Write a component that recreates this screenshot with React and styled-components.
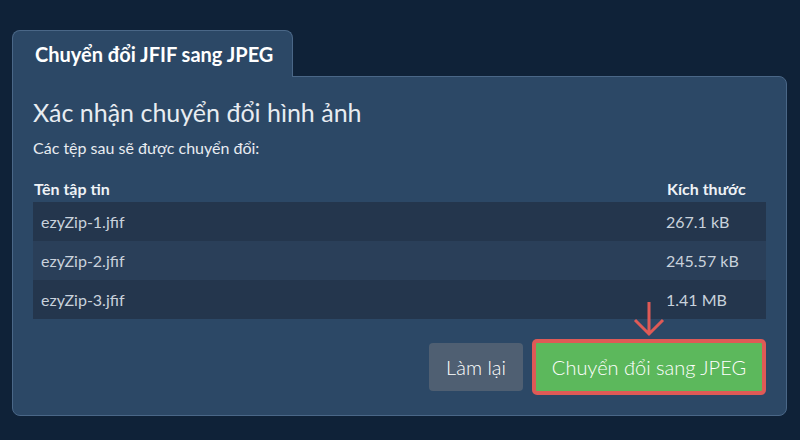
import styled, { createGlobalStyle } from "styled-components";

const GlobalStyle = createGlobalStyle`
  html, body {
    margin: 0;
    padding: 0;
    background: #0f2238;
    font-family: Lato, "Noto Sans", sans-serif;
  }
`;

const Page = styled.div`
  width: 800px;
  height: 440px;
  box-sizing: border-box;
  padding: 30px 13px 0 12px;
`;

const Tab = styled.div`
  position: relative;
  z-index: 1;
  width: 281px;
  height: 47px;
  box-sizing: border-box;
  margin-bottom: -1px;
  padding: 11px 0 0 22px;
  background: #2c4866;
  border: 1px solid #4a6787;
  border-bottom: none;
  border-radius: 8px 8px 0 0;
  color: #ffffff;
  font-size: 20px;
  font-weight: 700;
`;

const Panel = styled.div`
  box-sizing: border-box;
  height: 340px;
  padding: 20px 20px 0 20px;
  background: #2c4866;
  border: 1px solid #4a6787;
  border-radius: 0 8px 8px 8px;
`;

const Title = styled.h2`
  margin: 0;
  font-size: 25px;
  font-weight: 400;
  line-height: 30px;
  color: #e8ecf1;
`;

const Subtitle = styled.p`
  margin: 12px 0 0;
  font-size: 16px;
  line-height: 18px;
  color: #e8ecf1;
`;

const Table = styled.div`
  margin-top: 18px;
  display: grid;
  grid-template-columns: 1fr 100px;
`;

const HeadCell = styled.div`
  height: 27px;
  display: flex;
  align-items: center;
  padding-left: 1px;
  font-size: 16px;
  font-weight: 700;
  color: #eef2f6;
`;

const Cell = styled.div`
  height: 39px;
  display: flex;
  align-items: center;
  padding-left: ${(p) => (p.$first ? "8px" : "0")};
  background: ${(p) => (p.$odd ? "#24364d" : "#2a3f59")};
  font-size: 16px;
  color: #c9d2dc;
`;

const ButtonRow = styled.div`
  margin-top: 20px;
  display: flex;
  justify-content: flex-end;
  align-items: center;
  gap: 9px;
`;

const Button = styled.button`
  box-sizing: border-box;
  height: 48px;
  padding: 0 17px;
  border: none;
  border-radius: 4px;
  background: #4f5f72;
  color: #ffffff;
  font-family: Lato, "Noto Sans", sans-serif;
  font-size: 20px;
  font-weight: 300;
`;

const Highlight = styled.div`
  position: relative;
  box-sizing: border-box;
  width: 234px;
  height: 56px;
  padding: 4px;
  border-radius: 5px;
  background: #df5a56;
`;

const ConvertButton = styled(Button)`
  width: 100%;
  height: 100%;
  border-radius: 1px;
  background: #5cb85c;
  padding: 0;
`;

const Arrow = styled.svg`
  position: absolute;
  left: 50%;
  top: -38px;
  margin-left: -16px;
`;

const files = [
  { name: "ezyZip-1.jfif", size: "267.1 kB" },
  { name: "ezyZip-2.jfif", size: "245.57 kB" },
  { name: "ezyZip-3.jfif", size: "1.41 MB" },
];

const App = () => {
  return (
    <>
      <GlobalStyle />
      <Page>
        <Tab>Chuyển đổi JFIF sang JPEG</Tab>
        <Panel>
          <Title>Xác nhận chuyển đổi hình ảnh</Title>
          <Subtitle>Các tệp sau sẽ được chuyển đổi:</Subtitle>
          <Table>
            <HeadCell>Tên tập tin</HeadCell>
            <HeadCell>Kích thước</HeadCell>
            {files.map((f, i) => [
              <Cell key={f.name} $first $odd={i % 2 === 0}>
                {f.name}
              </Cell>,
              <Cell key={f.size} $odd={i % 2 === 0}>
                {f.size}
              </Cell>,
            ])}
          </Table>
          <ButtonRow>
            <Button>Làm lại</Button>
            <Highlight>
              <Arrow width="32" height="36" viewBox="0 0 32 36">
                <path
                  d="M16 1 V33 M2 19 L16 33 L30 19"
                  fill="none"
                  stroke="#df5a56"
                  strokeWidth="3"
                />
              </Arrow>
              <ConvertButton>Chuyển đổi sang JPEG</ConvertButton>
            </Highlight>
          </ButtonRow>
        </Panel>
      </Page>
    </>
  );
};

export default App;
